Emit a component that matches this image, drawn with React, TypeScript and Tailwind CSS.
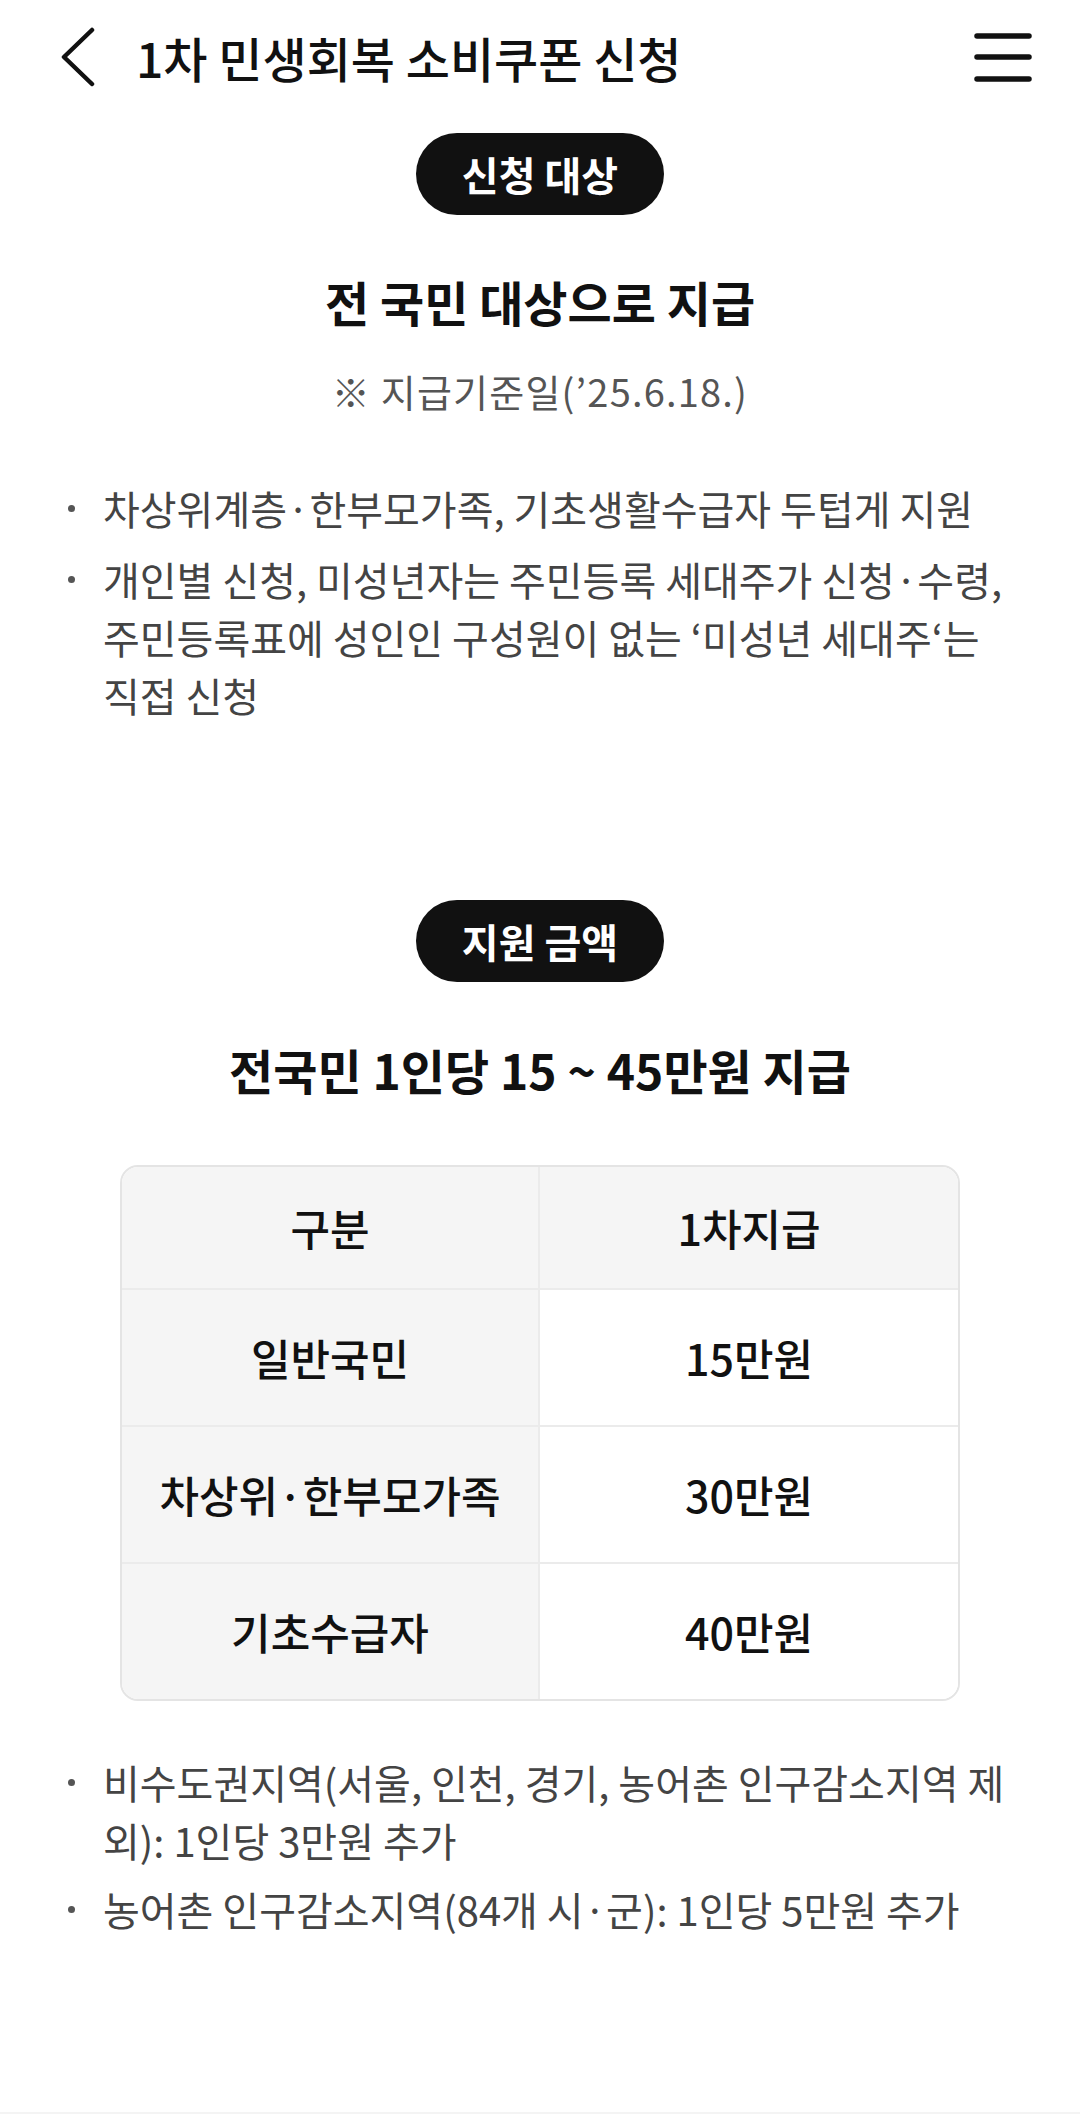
import React from "react";

const FONT = { fontFamily: '"Noto Sans CJK KR", "Noto Sans", sans-serif' };

function Pill({ label }: { label: string }) {
  return (
    <div className="flex justify-center">
      <div className="flex h-[82px] w-[248px] items-center justify-center rounded-full bg-[#111111] text-[40px] font-bold leading-none text-white">
        {label}
      </div>
    </div>
  );
}

function Bullet({ lines, className = "" }: { lines: string[]; className?: string }) {
  return (
    <li className={`flex ${className}`}>
      <span className="flex h-[58px] w-[43px] shrink-0 items-center">
        <span className="ml-[8px] block h-[7px] w-[7px] rounded-full bg-[#555555]" />
      </span>
      <span className="whitespace-nowrap text-[40px] leading-[58px] text-[#444444]">
        {lines.map((l, i) => (
          <React.Fragment key={i}>
            {i > 0 && <br />}
            {l}
          </React.Fragment>
        ))}
      </span>
    </li>
  );
}

const rows = [
  ["일반국민", "15만원"],
  ["차상위·한부모가족", "30만원"],
  ["기초수급자", "40만원"],
];

export default function App() {
  return (
    <div className="min-h-[2114px] w-[1080px] bg-white text-[#111111]" style={FONT}>
      {/* top bar */}
      <header className="flex h-[114px] items-center pl-[58px] pr-[48px]">
        <svg width="40" height="60" viewBox="0 0 40 60" className="shrink-0">
          <polyline
            points="34,3 6,30 34,57"
            fill="none"
            stroke="#111111"
            strokeWidth="4.5"
            strokeLinecap="round"
            strokeLinejoin="round"
          />
        </svg>
        <h1 className="ml-[38px] text-[48px] font-medium leading-none">
          1차 민생회복 소비쿠폰 신청
        </h1>
        <svg width="58" height="52" viewBox="0 0 58 52" className="ml-auto shrink-0">
          <g stroke="#111111" strokeWidth="5.5" strokeLinecap="round">
            <line x1="3" y1="5" x2="55" y2="5" />
            <line x1="3" y1="26" x2="55" y2="26" />
            <line x1="3" y1="48" x2="55" y2="48" />
          </g>
        </svg>
      </header>

      {/* eligibility */}
      <section className="mt-[19px]">
        <Pill label="신청 대상" />
        <h2 className="mt-[56px] text-center text-[48px] font-bold leading-[60px]">
          전 국민 대상으로 지급
        </h2>
        <p className="mt-[35px] text-center text-[38px] leading-[50px] tracking-[1.2px] text-[#555555]">
          ※ 지급기준일(’25.6.18.)
        </p>
        <ul className="mt-[63px] pl-[60px] pr-[30px]">
          <Bullet lines={["차상위계층·한부모가족, 기초생활수급자 두텁게 지원"]} />
          <Bullet
            className="mt-[13px]"
            lines={[
              "개인별 신청, 미성년자는 주민등록 세대주가 신청·수령,",
              "주민등록표에 성인인 구성원이 없는 ‘미성년 세대주‘는",
              "직접 신청",
            ]}
          />
        </ul>
      </section>

      {/* amount */}
      <section className="mt-[176px]">
        <Pill label="지원 금액" />
        <h2 className="mt-[57px] text-center text-[48px] font-bold leading-[60px]">
          전국민 1인당 15 ~ 45만원 지급
        </h2>

        <div className="mx-auto mt-[66px] w-[840px] overflow-hidden rounded-[18px] border-2 border-[#e4e4e4]">
          <div className="grid h-[121px] grid-cols-2 bg-[#f5f5f5] text-[43px] font-medium">
            <div className="flex items-center justify-center border-r-2 border-[#ebebeb]">구분</div>
            <div className="flex items-center justify-center">1차지급</div>
          </div>
          {rows.map(([k, v]) => (
            <div
              key={k}
              className="grid h-[137px] grid-cols-2 border-t-2 border-[#ebebeb] text-[43px] font-medium"
            >
              <div className="flex items-center justify-center border-r-2 border-[#ebebeb] bg-[#f5f5f5]">{k}</div>
              <div className="flex items-center justify-center bg-white">{v}</div>
            </div>
          ))}
        </div>

        <ul className="mt-[52px] pl-[60px] pr-[30px]">
          <Bullet lines={["비수도권지역(서울, 인천, 경기, 농어촌 인구감소지역 제", "외): 1인당 3만원 추가"]} />
          <Bullet className="mt-[11px]" lines={["농어촌 인구감소지역(84개 시·군): 1인당 5만원 추가"]} />
        </ul>
      </section>

      <div className="mt-[174px] h-[40px] bg-[#f4f4f4]" />
    </div>
  );
}
